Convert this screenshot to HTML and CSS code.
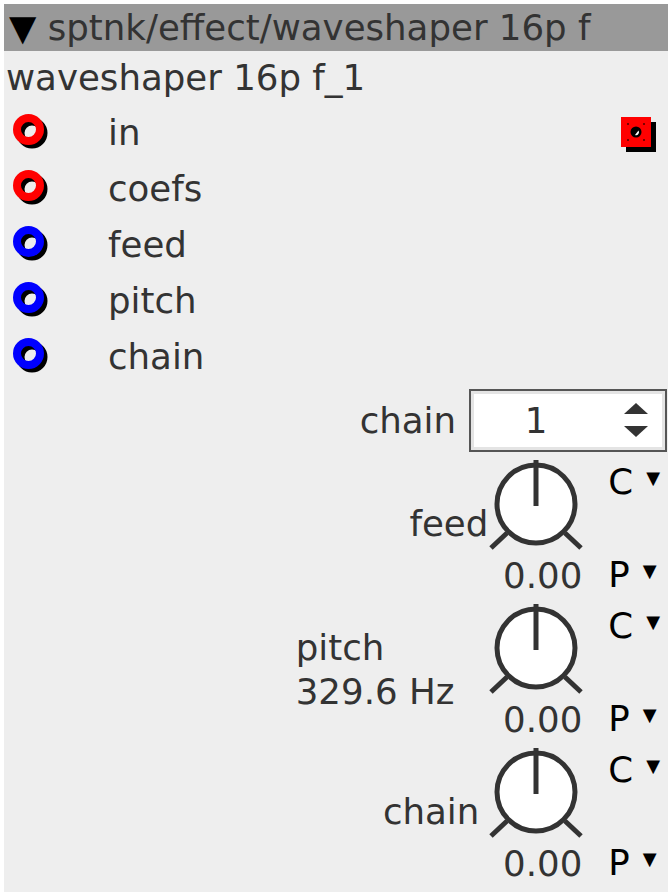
FILE: index.html
```html
<!DOCTYPE html>
<html lang="en">
<head>
  <meta charset="UTF-8">
  <title>waveshaper 16p f</title>
  <link rel="stylesheet" href="styles.css">
</head>
<body>
  <div class="node">
    <div class="node-head"><span class="caret">▼</span> sptnk/effect/waveshaper 16p f</div>
    <div class="node-name">waveshaper 16p f_1</div>

    <div class="ports">
      <div class="port-row">
        <svg class="jack" viewBox="0 0 38 38"><circle cx="19" cy="19" r="11.5" class="jack-shadow"/><circle cx="15.5" cy="15.5" r="11.5" class="jack-audio"/></svg>
        <span class="port-name">in</span>
        <svg class="outlet" viewBox="0 0 36 36">
          <rect x="5" y="5" width="30" height="30" fill="#000"/>
          <rect x="0" y="0" width="30" height="30" fill="#ff0000"/>
          <rect x="6" y="6" width="2" height="2" fill="#7a0000"/>
          <rect x="22" y="6" width="2" height="2" fill="#7a0000"/>
          <rect x="6" y="22" width="2" height="2" fill="#7a0000"/>
          <rect x="22" y="22" width="2" height="2" fill="#7a0000"/>
          <circle cx="15" cy="15" r="5.5" fill="#000"/>
          <path d="M17.5 13.5 A3 3 0 0 1 14 18 Z" fill="#fff"/>
        </svg>
      </div>
      <div class="port-row">
        <svg class="jack" viewBox="0 0 38 38"><circle cx="19" cy="19" r="11.5" class="jack-shadow"/><circle cx="15.5" cy="15.5" r="11.5" class="jack-audio"/></svg>
        <span class="port-name">coefs</span>
      </div>
      <div class="port-row">
        <svg class="jack" viewBox="0 0 38 38"><circle cx="19" cy="19" r="11.5" class="jack-shadow"/><circle cx="15.5" cy="15.5" r="11.5" class="jack-cv"/></svg>
        <span class="port-name">feed</span>
      </div>
      <div class="port-row">
        <svg class="jack" viewBox="0 0 38 38"><circle cx="19" cy="19" r="11.5" class="jack-shadow"/><circle cx="15.5" cy="15.5" r="11.5" class="jack-cv"/></svg>
        <span class="port-name">pitch</span>
      </div>
      <div class="port-row">
        <svg class="jack" viewBox="0 0 38 38"><circle cx="19" cy="19" r="11.5" class="jack-shadow"/><circle cx="15.5" cy="15.5" r="11.5" class="jack-cv"/></svg>
        <span class="port-name">chain</span>
      </div>
    </div>

    <div class="spin-row">
      <span class="spin-label">chain</span>
      <div class="spinbox">
        <span class="spin-value">1</span>
        <svg class="spin-arrows" viewBox="0 0 26 36">
          <path d="M1 12 L13 1 L25 12 Z"/>
          <path d="M1 24 L25 24 L13 35 Z"/>
        </svg>
      </div>
    </div>

    <div class="knob-row">
      <div class="knob-label">feed</div>
      <div class="knob">
        <svg class="knob-dial" viewBox="0 0 96 96">
          <line x1="19" y1="73" x2="3" y2="88"/>
          <line x1="77" y1="73" x2="93" y2="88"/>
          <circle cx="48" cy="44" r="39"/>
          <line x1="48" y1="0" x2="48" y2="46"/>
        </svg>
        <div class="knob-value">0.00</div>
      </div>
      <div class="knob-mods">
        <div class="mod">C<span class="tri">▼</span></div>
        <div class="mod">P<span class="tri">▼</span></div>
      </div>
    </div>

    <div class="knob-row">
      <div class="knob-label knob-label-wide">pitch<br>329.6 Hz</div>
      <div class="knob">
        <svg class="knob-dial" viewBox="0 0 96 96">
          <line x1="19" y1="73" x2="3" y2="88"/>
          <line x1="77" y1="73" x2="93" y2="88"/>
          <circle cx="48" cy="44" r="39"/>
          <line x1="48" y1="0" x2="48" y2="46"/>
        </svg>
        <div class="knob-value">0.00</div>
      </div>
      <div class="knob-mods">
        <div class="mod">C<span class="tri">▼</span></div>
        <div class="mod">P<span class="tri">▼</span></div>
      </div>
    </div>

    <div class="knob-row">
      <div class="knob-label knob-label-short">chain</div>
      <div class="knob">
        <svg class="knob-dial" viewBox="0 0 96 96">
          <line x1="19" y1="73" x2="3" y2="88"/>
          <line x1="77" y1="73" x2="93" y2="88"/>
          <circle cx="48" cy="44" r="39"/>
          <line x1="48" y1="0" x2="48" y2="46"/>
        </svg>
        <div class="knob-value">0.00</div>
      </div>
      <div class="knob-mods">
        <div class="mod">C<span class="tri">▼</span></div>
        <div class="mod">P<span class="tri">▼</span></div>
      </div>
    </div>
  </div>
</body>
</html>
```

FILE: styles.css
```css
body {
  margin: 0;
  padding: 4px;
  background-color: #ffffff;
  font-family: "DejaVu Sans", sans-serif;
  font-size: 35.6px;
  color: #333333;
}
.node {
  width: 664px;
  height: 888px;
  background-color: #eeeeee;
}
.node-head {
  height: 47px;
  line-height: 47px;
  background-color: #999999;
  padding-left: 5px;
  white-space: nowrap;
}
.caret {
  color: #000000;
}
.node-name {
  height: 53px;
  line-height: 53px;
  padding-left: 2px;
}

/* ports */
.port-row {
  display: flex;
  align-items: center;
  height: 56px;
}
.jack {
  width: 38px;
  height: 38px;
  margin-left: 9px;
  margin-right: 57px;
  margin-top: 2px;
}
.jack circle {
  fill: none;
  stroke-width: 8;
}
.jack-shadow { stroke: #000000; }
.jack-audio { stroke: #ff0000; }
.jack-cv { stroke: #0000ff; }
.port-name {
  flex: 1;
}
.outlet {
  width: 36px;
  height: 36px;
  margin-right: 11px;
  margin-top: 6px;
}

/* chain spinner */
.spin-row {
  display: flex;
  justify-content: flex-end;
  align-items: center;
  height: 72px;
  padding-right: 1px;
}
.spin-label {
  margin-right: 13px;
}
.spinbox {
  box-sizing: border-box;
  width: 198px;
  height: 63px;
  border: 2px solid #555555;
  box-shadow: inset 0 0 0 3px #e4e4e4;
  background-color: #ffffff;
  display: flex;
  align-items: center;
}
.spin-value {
  width: 130px;
  text-align: center;
}
.spin-arrows {
  width: 26px;
  height: 36px;
  margin-left: 22px;
  fill: #333333;
}

/* knobs */
.knob-row {
  display: flex;
  justify-content: flex-end;
  height: 144px;
  padding-right: 8px;
}
.knob-label {
  align-self: center;
  line-height: 44px;
  margin-bottom: 8px;
}
.knob-label-wide {
  margin-right: 34px;
  margin-bottom: 4px;
}
.knob-label-short {
  margin-right: 9px;
}
.knob {
  width: 96px;
  padding-top: 4px;
}
.knob-dial {
  display: block;
  width: 96px;
  height: 96px;
}
.knob-dial circle {
  fill: #ffffff;
  stroke: #333333;
  stroke-width: 5;
}
.knob-dial line {
  stroke: #333333;
  stroke-width: 5;
}
.knob-value {
  height: 40px;
  line-height: 40px;
  text-align: right;
  margin-right: 2px;
  white-space: nowrap;
}
.knob-mods {
  display: flex;
  flex-direction: column;
  justify-content: space-between;
  margin-left: 24px;
  padding-bottom: 3px;
  color: #000000;
}
.mod {
  line-height: 44px;
  white-space: nowrap;
}
.tri {
  font-size: 18px;
  vertical-align: 10px;
  margin-left: 13px;
}
```
